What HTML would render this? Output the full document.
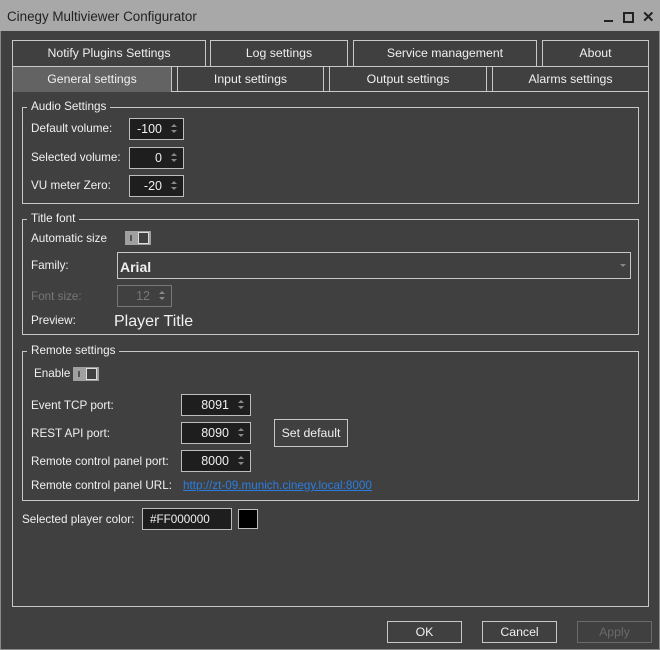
<!DOCTYPE html>
<html><head><style>
*{box-sizing:border-box;margin:0;padding:0}
body{width:660px;height:650px;background:#404040;font-family:"Liberation Sans",sans-serif;font-size:11.7px;color:#f0f0f0;position:relative;overflow:hidden}
.a{position:absolute}
.win{left:0;top:0;width:660px;height:650px;border:1px solid #8a8a8a;border-top:none}
.title{left:0;top:0;width:660px;height:31px;background:#a8a8a8;color:#222;font-size:13.4px;padding:9px 0 0 7px}
.tab{border:1px solid #c8c8c8;text-align:center;line-height:25px;background:#404040;font-size:12.3px}
.box{border:1px solid #c8c8c8}
.leg{background:#404040;padding:0 4px;line-height:14px}
.lbl{line-height:14px}
.spin{background:#1e1e1e;border:1px solid #bdbdbd;text-align:right;padding-right:21px;font-size:12.5px;line-height:21px}
.spin:after{content:"";position:absolute;right:6px;top:5px;border:3px solid transparent;border-bottom:3px solid #888;border-top:0}
.spin:before{content:"";position:absolute;right:6px;top:11px;border:3px solid transparent;border-top:3px solid #888;border-bottom:0}
.tog{background:#a0a0a0;width:26px;height:14px}
.tog i{position:absolute;left:5px;top:4px;width:2px;height:6px;background:#555}
.tog b{position:absolute;right:2px;top:1px;width:11px;height:12px;background:#404040;border:1px solid #ddd}
.btn{border:1px solid #c8c8c8;text-align:center;font-size:12.3px}
</style></head><body>
<div class="a win"></div>
<div class="a title">Cinegy Multiviewer Configurator</div>
<div class="a" style="left:604px;top:20px;width:9px;height:2px;background:#222"></div>
<div class="a" style="left:623px;top:12px;width:11px;height:11px;border:2px solid #222"></div>
<div class="a" style="left:642px;top:8px;color:#222;font-size:15px;font-weight:bold">✕</div>

<div class="a tab" style="left:12px;top:40px;width:194px;height:27px">Notify Plugins Settings</div>
<div class="a tab" style="left:210px;top:40px;width:138px;height:27px">Log settings</div>
<div class="a tab" style="left:353px;top:40px;width:184px;height:27px">Service management</div>
<div class="a tab" style="left:542px;top:40px;width:107px;height:27px">About</div>

<div class="a box" style="left:12px;top:91px;width:637px;height:516px"></div>
<div class="a tab" style="left:12px;top:66px;width:160px;height:26px;background:#636363;border-bottom:none">General settings</div>
<div class="a tab" style="left:177px;top:66px;width:147px;height:26px">Input settings</div>
<div class="a tab" style="left:329px;top:66px;width:158px;height:26px">Output settings</div>
<div class="a tab" style="left:492px;top:66px;width:157px;height:26px">Alarms settings</div>

<!-- Audio -->
<div class="a box" style="left:22px;top:107px;width:617px;height:97px"></div>
<div class="a leg" style="left:27px;top:100px">Audio Settings</div>
<div class="a lbl" style="left:31px;top:122px">Default volume:</div>
<div class="a spin" style="left:129px;top:118px;width:55px;height:22px">-100</div>
<div class="a lbl" style="left:31px;top:151px">Selected volume:</div>
<div class="a spin" style="left:129px;top:147px;width:55px;height:22px">0</div>
<div class="a lbl" style="left:31px;top:179px">VU meter Zero:</div>
<div class="a spin" style="left:129px;top:175px;width:55px;height:22px">-20</div>

<!-- Title font -->
<div class="a box" style="left:22px;top:219px;width:617px;height:116px"></div>
<div class="a leg" style="left:27px;top:212px">Title font</div>
<div class="a lbl" style="left:31px;top:232px">Automatic size</div>
<div class="a tog" style="left:125px;top:231px"><i></i><b></b></div>
<div class="a lbl" style="left:31px;top:259px">Family:</div>
<div class="a" style="left:117px;top:252px;width:514px;height:27px;border:1px solid #c8c8c8;font-weight:bold;font-size:14px;padding:6px 0 0 2px">Arial</div>
<div class="a" style="left:620px;top:264px;border:3px solid transparent;border-top:3px solid #888"></div>
<div class="a lbl" style="left:31px;top:290px;color:#777">Font size:</div>
<div class="a spin" style="left:117px;top:285px;width:55px;height:22px;background:#404040;border-color:#777;color:#777">12</div>
<div class="a lbl" style="left:31px;top:314px">Preview:</div>
<div class="a" style="left:114px;top:313px;font-size:16px">Player Title</div>

<!-- Remote -->
<div class="a box" style="left:22px;top:351px;width:617px;height:150px"></div>
<div class="a leg" style="left:27px;top:344px">Remote settings</div>
<div class="a lbl" style="left:34px;top:367px">Enable</div>
<div class="a tog" style="left:73px;top:367px"><i></i><b></b></div>
<div class="a lbl" style="left:31px;top:399px">Event TCP port:</div>
<div class="a spin" style="left:181px;top:394px;width:70px;height:22px">8091</div>
<div class="a lbl" style="left:31px;top:427px">REST API port:</div>
<div class="a spin" style="left:181px;top:422px;width:70px;height:22px">8090</div>
<div class="a btn" style="left:274px;top:419px;width:74px;height:28px;line-height:26px">Set default</div>
<div class="a lbl" style="left:31px;top:455px">Remote control panel port:</div>
<div class="a spin" style="left:181px;top:450px;width:70px;height:22px">8000</div>
<div class="a lbl" style="left:31px;top:479px">Remote control panel URL:</div>
<div class="a lbl" style="left:183px;top:479px;color:#2a7de1;text-decoration:underline">http://zt-09.munich.cinegy.local:8000</div>

<div class="a lbl" style="left:22px;top:513px">Selected player color:</div>
<div class="a" style="left:142px;top:508px;width:90px;height:22px;background:#1e1e1e;border:1px solid #bdbdbd;padding:4px 0 0 7px">#FF000000</div>
<div class="a" style="left:238px;top:509px;width:20px;height:20px;background:#000;border:1px solid #bdbdbd"></div>

<div class="a btn" style="left:387px;top:621px;width:75px;height:22px;line-height:20px">OK</div>
<div class="a btn" style="left:482px;top:621px;width:75px;height:22px;line-height:20px">Cancel</div>
<div class="a btn" style="left:577px;top:621px;width:75px;height:22px;line-height:20px;border-color:#6a6a6a;color:#6a6a6a">Apply</div>
</body></html>
